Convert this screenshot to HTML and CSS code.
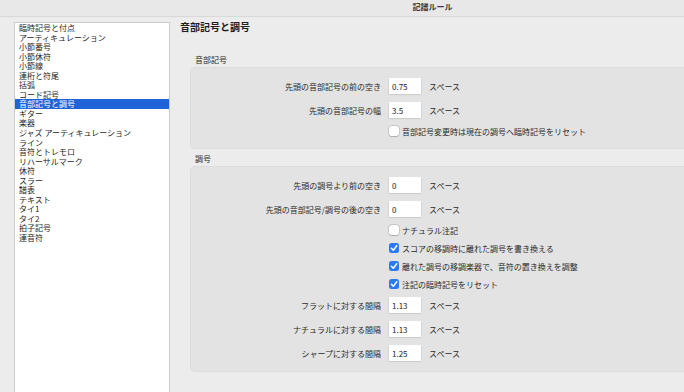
FILE: index.html
```html
<!DOCTYPE html>
<html>
<head>
    <meta charset="utf-8">
    <title>記譜ルール</title>
    <link rel="stylesheet" href="styles.css">
</head>
<body>
<div class="window">
    <div class="titlebar">記譜ルール</div>

    <div class="main">
        <ul class="sidebar">
            <li>臨時記号と付点</li>
            <li>アーティキュレーション</li>
            <li>小節番号</li>
            <li>小節休符</li>
            <li>小節線</li>
            <li>連桁と符尾</li>
            <li>括弧</li>
            <li>コード記号</li>
            <li class="selected">音部記号と調号</li>
            <li>ギター</li>
            <li>楽器</li>
            <li>ジャズ アーティキュレーション</li>
            <li>ライン</li>
            <li>音符とトレモロ</li>
            <li>リハーサルマーク</li>
            <li>休符</li>
            <li>スラー</li>
            <li>譜表</li>
            <li>テキスト</li>
            <li>タイ1</li>
            <li>タイ2</li>
            <li>拍子記号</li>
            <li>連音符</li>
        </ul>

        <div class="panel">
            <h2>音部記号と調号</h2>

            <div class="section-label first">音部記号</div>
            <div class="group">
                <div class="field">
                    <label>先頭の音部記号の前の空き</label>
                    <input type="text" value="0.75">
                    <span class="unit">スペース</span>
                </div>
                <div class="field">
                    <label>先頭の音部記号の幅</label>
                    <input type="text" value="3.5">
                    <span class="unit">スペース</span>
                </div>
                <div class="check">
                    <span class="box"></span>
                    <span>音部記号変更時は現在の調号へ臨時記号をリセット</span>
                </div>
            </div>

            <div class="section-label">調号</div>
            <div class="group last">
                <div class="field">
                    <label>先頭の調号より前の空き</label>
                    <input type="text" value="0">
                    <span class="unit">スペース</span>
                </div>
                <div class="field">
                    <label>先頭の音部記号/調号の後の空き</label>
                    <input type="text" value="0">
                    <span class="unit">スペース</span>
                </div>
                <div class="check">
                    <span class="box"></span>
                    <span>ナチュラル注記</span>
                </div>
                <div class="check">
                    <span class="box on"><svg viewBox="0 0 10 10"><polyline points="2.4,5.2 4.3,7.2 7.8,2.8"/></svg></span>
                    <span>スコアの移調時に離れた調号を書き換える</span>
                </div>
                <div class="check">
                    <span class="box on"><svg viewBox="0 0 10 10"><polyline points="2.4,5.2 4.3,7.2 7.8,2.8"/></svg></span>
                    <span>離れた調号の移調楽器で、音符の置き換えを調整</span>
                </div>
                <div class="check">
                    <span class="box on"><svg viewBox="0 0 10 10"><polyline points="2.4,5.2 4.3,7.2 7.8,2.8"/></svg></span>
                    <span>注記の臨時記号をリセット</span>
                </div>
                <div class="field">
                    <label>フラットに対する間隔</label>
                    <input type="text" value="1.13">
                    <span class="unit">スペース</span>
                </div>
                <div class="field">
                    <label>ナチュラルに対する間隔</label>
                    <input type="text" value="1.13">
                    <span class="unit">スペース</span>
                </div>
                <div class="field">
                    <label>シャープに対する間隔</label>
                    <input type="text" value="1.25">
                    <span class="unit">スペース</span>
                </div>
            </div>
        </div>
    </div>
</div>
</body>
</html>
```

FILE: styles.css
```css
html, body {
    margin: 0;
    padding: 0;
    background: #ececec;
}
body {
    font-family: "Noto Sans CJK JP", "Noto Sans", sans-serif;
    font-size: 8px;
    color: #262626;
}
.window {
    width: 684px;
    height: 392px;
    overflow: hidden;
}
.titlebar {
    height: 16px;
    line-height: 13px;
    padding-left: 181px;
    text-align: center;
    font-weight: bold;
    color: #3a3a3a;
    background: #e8e8e8;
    border-bottom: 1px solid #d8d8d8;
}
.main {
    display: flex;
    align-items: flex-start;
}
.sidebar {
    list-style: none;
    margin: 5px 0 0 14px;
    padding: 0;
    width: 154px;
    height: 370px;
    background: #fff;
    border: 1px solid #cacaca;
    border-bottom: none;
}
.sidebar li {
    line-height: 9.55px;
    height: 9.55px;
    padding-left: 4px;
    white-space: nowrap;
    color: #1e1e1e;
}
.sidebar li.selected {
    background: #2063d9;
    color: #fff;
}
.panel {
    flex: 1;
    margin-left: 10px;
}
h2 {
    margin: 3px 0 0 0;
    font-size: 10px;
    line-height: 14px;
    font-weight: bold;
    color: #1e1e1e;
}
.section-label {
    margin: 5px 0 2px 15px;
    line-height: 10px;
    color: #2a2a2a;
}
.section-label.first {
    margin-top: 21px;
}
.group {
    margin-left: 10px;
    padding: 6px 0 8px 0;
    background: #e3e3e3;
    border: 1px solid #dcdcdc;
    border-right: none;
    border-radius: 5px 0 0 5px;
}
.group.last {
    padding-bottom: 6px;
}
.field {
    display: flex;
    align-items: center;
    padding: 4px 0;
    height: 16px;
}
.field label {
    width: 190px;
    text-align: right;
    color: #2a2a2a;
}
.field input {
    margin-left: 8px;
    width: 32px;
    height: 16px;
    padding: 0 0 0 3px;
    border: none;
    outline: none;
    background: #fff;
    box-shadow: 0 0.5px 1.5px rgba(0, 0, 0, 0.25);
    font-family: "Noto Sans CJK JP", "Noto Sans", sans-serif;
    font-size: 8px;
    color: #1e1e1e;
    box-sizing: border-box;
}
.field .unit {
    margin-left: 8px;
    color: #2a2a2a;
}
.check {
    display: flex;
    align-items: center;
    height: 18px;
    padding-left: 198px;
    color: #2a2a2a;
}
.box {
    width: 10px;
    height: 10px;
    margin-right: 3px;
    border-radius: 2.5px;
    background: #fff;
    box-shadow: 0 0 0 0.5px rgba(0, 0, 0, 0.22), 0 0.5px 1px rgba(0, 0, 0, 0.15);
    box-sizing: border-box;
}
.box.on {
    background: #2a7bf3;
    box-shadow: none;
}
.box svg {
    display: block;
    width: 10px;
    height: 10px;
}
.box polyline {
    fill: none;
    stroke: #fff;
    stroke-width: 1.5;
    stroke-linecap: round;
    stroke-linejoin: round;
}
```
